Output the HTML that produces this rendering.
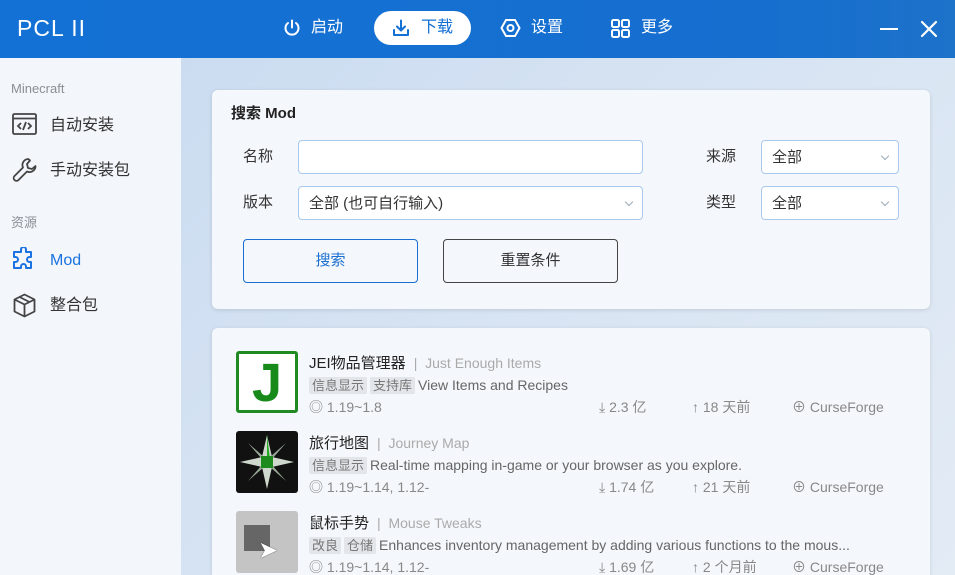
<!DOCTYPE html>
<html style="width:955px;height:575px;overflow:hidden"><head><meta charset="utf-8"><style>
*{margin:0;padding:0;box-sizing:border-box}
body{width:955px;height:575px;overflow:hidden;position:relative;line-height:1.15;font-family:"Liberation Sans","Noto Sans CJK SC",sans-serif;background:linear-gradient(135deg,#c6d9f0,#d9e5f3 60%,#e3ebf5);}
.a{position:absolute}
#hd{left:0;top:0;width:955px;height:58px;background:linear-gradient(90deg,#1370d4,#166fcf 80%,#1d72c9);color:#fff}
.nav{font-size:16px;top:19px;color:#fff;white-space:nowrap}
#sb{left:0;top:58px;width:181px;height:517px;background:#f3f6fa}
.sec{font-size:13px;color:#8a8f96}
.it{font-size:16px;color:#333}
.card{background:#f4f7fb;border-radius:6px;box-shadow:0 1px 4px rgba(0,0,0,.12)}
.lbl{font-size:15px;color:#333}
.inp{border:1px solid #a9c8ec;border-radius:4px;background:#fff;font-size:15px;color:#333;padding:8px 10px}
.chev{position:absolute;right:10px;top:12px;width:6px;height:6px;border-right:1.3px solid #9ab;border-bottom:1.3px solid #9ab;transform:rotate(45deg)}
.btn{border-radius:4px;font-size:15px;text-align:center;line-height:41px}
.t{font-size:15px;color:#222}
.en{color:#aaa;font-size:14px}
.d{font-size:14px;color:#666;white-space:nowrap}
.tag{background:#e2e5e9;color:#777;font-size:13px;padding:1px 3px;border-radius:2px;margin-right:3px}
.m{font-size:14px;color:#888;white-space:nowrap}
</style></head><body>
<div id="hd" class="a">
<div class="a" style="left:17px;top:15px;font-size:23px;letter-spacing:1px">PCL II</div>
<svg class="a" style="left:283px;top:19px" width="18" height="18" viewBox="0 0 18 18" fill="none" stroke="#fff" stroke-width="2" stroke-linecap="round"><path d="M9 1.5v7"/><path d="M5 4a6.5 6.5 0 1 0 8 0"/></svg>
<div class="a nav" style="left:311px">启动</div>
<div class="a" style="left:374px;top:11px;width:97px;height:34px;background:#fff;border-radius:17px"></div>
<svg class="a" style="left:392px;top:19px" width="18" height="18" viewBox="0 0 18 18" fill="none" stroke="#1370d4" stroke-width="2" stroke-linecap="round" stroke-linejoin="round"><path d="M9 1.5v10M5 7.5l4 4 4-4M2 11v5h14v-5"/></svg>
<div class="a nav" style="left:421px;color:#1370d4">下载</div>
<svg class="a" style="left:500px;top:18px" width="21" height="20" viewBox="0 0 21 20" fill="none" stroke="#fff" stroke-width="2"><path d="M6 2h9l4.5 8-4.5 8H6L1.5 10z"/><circle cx="10.5" cy="10" r="3"/></svg>
<div class="a nav" style="left:531px">设置</div>
<svg class="a" style="left:611px;top:19px" width="19" height="19" viewBox="0 0 19 19" fill="none" stroke="#fff" stroke-width="2"><rect x="1" y="1" width="7" height="7" rx="1.5"/><rect x="11" y="1" width="7" height="7" rx="1.5"/><rect x="1" y="11" width="7" height="7" rx="1.5"/><rect x="11" y="11" width="7" height="7" rx="1.5"/></svg>
<div class="a nav" style="left:641px">更多</div>
<div class="a" style="left:880px;top:28px;width:18px;height:2px;background:#fff"></div>
<svg class="a" style="left:920px;top:20px" width="18" height="18" viewBox="0 0 18 18" stroke="#fff" stroke-width="2.2" stroke-linecap="round"><path d="M2 2l14 14M16 2L2 16"/></svg>
</div>
<div id="sb" class="a">
<div class="a sec" style="left:11px;top:24px">Minecraft</div>
<svg class="a" style="left:12px;top:55px" width="25" height="22" viewBox="0 0 25 22" fill="none" stroke="#444" stroke-width="1.8"><rect x="1" y="1" width="23" height="20" rx="1.5"/><path d="M1 5.5h23M9 10l-3 3 3 3M16 10l3 3-3 3M14 9l-3 8"/></svg>
<div class="a it" style="left:50px;top:59px">自动安装</div>
<svg class="a" style="left:12px;top:99px" width="26" height="26" viewBox="0 0 26 26" fill="none" stroke="#444" stroke-width="1.8" stroke-linejoin="round"><path d="M16 2a6 6 0 0 0-5 8.5L2.5 19a2.5 2.5 0 0 0 4 4l8.5-8.5A6 6 0 0 0 23.5 9l-3.5 3-4-1-1-4 3-3.5A6 6 0 0 0 16 2z"/></svg>
<div class="a it" style="left:50px;top:104px">手动安装包</div>
<div class="a sec" style="left:11px;top:158px">资源</div>
<svg class="a" style="left:12px;top:189px" width="25" height="25" viewBox="0 0 25 25" fill="none" stroke="#1a73e0" stroke-width="2" stroke-linejoin="round"><path d="M9 2.5a2.5 2.5 0 0 1 5 0V5h5v5h-1.5a2.5 2.5 0 0 0 0 5H19v6h-5v-1.5a2.5 2.5 0 0 0-5 0V21H2v-6h1.5a2.5 2.5 0 0 0 0-5H2V5h7z"/></svg>
<div class="a it" style="left:50px;top:194px;color:#1a73e0">Mod</div>
<svg class="a" style="left:12px;top:235px" width="25" height="25" viewBox="0 0 25 25" fill="none" stroke="#444" stroke-width="1.8" stroke-linejoin="round"><path d="M12.5 1.5l10 5v12l-10 5-10-5v-12zM2.5 6.5l10 5 10-5M12.5 11.5v12M7.5 4l10 5"/></svg>
<div class="a it" style="left:50px;top:239px">整合包</div>
</div>
<div class="a card" style="left:212px;top:90px;width:718px;height:219px">
<div class="a" style="left:19px;top:15px;font-size:15px;font-weight:bold;color:#222">搜索 Mod</div>
<div class="a lbl" style="left:31px;top:58px">名称</div>
<div class="a inp" style="left:86px;top:50px;width:345px;height:34px"></div>
<div class="a lbl" style="left:494px;top:58px">来源</div>
<div class="a inp" style="left:549px;top:50px;width:138px;height:34px">全部<span class="chev"></span></div>
<div class="a lbl" style="left:31px;top:104px">版本</div>
<div class="a inp" style="left:86px;top:96px;width:345px;height:34px">全部 (也可自行输入)<span class="chev"></span></div>
<div class="a lbl" style="left:494px;top:104px">类型</div>
<div class="a inp" style="left:549px;top:96px;width:138px;height:34px">全部<span class="chev"></span></div>
<div class="a btn" style="left:31px;top:149px;width:175px;height:44px;border:1.5px solid #1a6fd0;color:#1a6fd0">搜索</div>
<div class="a btn" style="left:231px;top:149px;width:175px;height:44px;border:1.5px solid #444;color:#333">重置条件</div>
</div>
<div class="a card" style="left:212px;top:328px;width:718px;height:247px;border-radius:6px 6px 0 0">
<div class="a" style="left:24px;top:23px;width:62px;height:62px;background:#fff;border:3px solid #1f8a22;border-radius:3px;color:#178a1a;font-size:54px;font-weight:bold;text-align:center;line-height:58px">J</div>
<div class="a t" style="left:97px;top:27px">JEI物品管理器 <span class="en">&nbsp;|&nbsp; Just Enough Items</span></div>
<div class="a d" style="left:97px;top:49px"><span class="tag">信息显示</span><span class="tag">支持库</span>View Items and Recipes</div>
<div class="a m" style="left:97px;top:71px">◎ 1.19~1.8</div>
<div class="a m" style="left:387px;top:71px">⤓ 2.3 亿</div>
<div class="a m" style="left:480px;top:71px">↑ 18 天前</div>
<div class="a m" style="left:580px;top:71px">⊕ CurseForge</div>

<div class="a" style="left:24px;top:103px;width:62px;height:62px;background:#111;border-radius:3px;overflow:hidden"><svg width="62" height="62" viewBox="0 0 62 62"><path d="M31 4l5 22 22 5-22 5-5 22-5-22-22-5 22-5z" fill="#cfd8cc"/><path d="M12 12l16 14-2 2zM50 12L34 26l2 2zM12 50l14-16 2 2zM50 50L34 36l2-2z" fill="#9a9"/><path d="M31 4l3 24-3 3z" fill="#2a2"/><rect x="25" y="25" width="12" height="12" fill="#1c8a1c"/></svg></div>
<div class="a t" style="left:97px;top:107px">旅行地图 <span class="en">&nbsp;|&nbsp; Journey Map</span></div>
<div class="a d" style="left:97px;top:129px"><span class="tag">信息显示</span>Real-time mapping in-game or your browser as you explore.</div>
<div class="a m" style="left:97px;top:151px">◎ 1.19~1.14, 1.12-</div>
<div class="a m" style="left:387px;top:151px">⤓ 1.74 亿</div>
<div class="a m" style="left:480px;top:151px">↑ 21 天前</div>
<div class="a m" style="left:580px;top:151px">⊕ CurseForge</div>

<div class="a" style="left:24px;top:183px;width:62px;height:62px;background:#c4c4c4;border-radius:3px;overflow:hidden"><div class="a" style="left:8px;top:14px;width:26px;height:26px;background:#666"></div><div class="a" style="left:22px;top:26px;color:#fff;font-size:24px;text-shadow:0 0 1px #000">➤</div></div>
<div class="a t" style="left:97px;top:187px">鼠标手势 <span class="en">&nbsp;|&nbsp; Mouse Tweaks</span></div>
<div class="a d" style="left:97px;top:209px"><span class="tag">改良</span><span class="tag">仓储</span>Enhances inventory management by adding various functions to the mous...</div>
<div class="a m" style="left:97px;top:231px">◎ 1.19~1.14, 1.12-</div>
<div class="a m" style="left:387px;top:231px">⤓ 1.69 亿</div>
<div class="a m" style="left:480px;top:231px">↑ 2 个月前</div>
<div class="a m" style="left:580px;top:231px">⊕ CurseForge</div>
</div>
</body></html>
